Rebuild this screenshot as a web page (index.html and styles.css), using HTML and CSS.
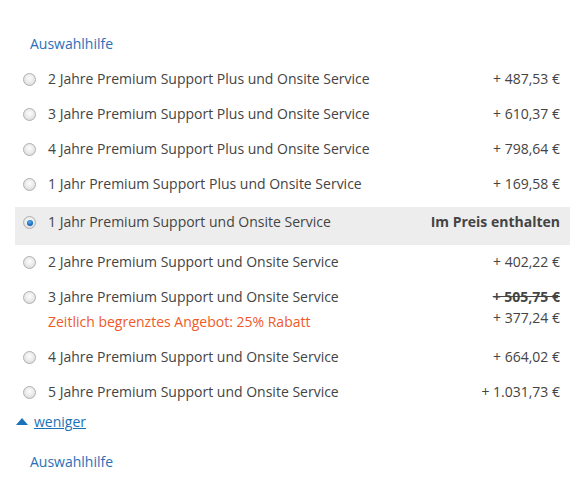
FILE: index.html
```html
<!DOCTYPE html>
<html lang="de">
<head>
<meta charset="utf-8">
<link rel="stylesheet" href="styles.css">
</head>
<body>
<div class="panel">
  <a class="help help-top" href="#">Auswahlhilfe</a>
  <ul class="options">
    <li class="opt"><span class="radio"></span><span class="label">2 Jahre Premium Support Plus und Onsite Service</span><span class="price">+ 487,53 €</span></li>
    <li class="opt"><span class="radio"></span><span class="label">3 Jahre Premium Support Plus und Onsite Service</span><span class="price">+ 610,37 €</span></li>
    <li class="opt"><span class="radio"></span><span class="label">4 Jahre Premium Support Plus und Onsite Service</span><span class="price">+ 798,64 €</span></li>
    <li class="opt"><span class="radio"></span><span class="label">1 Jahr Premium Support Plus und Onsite Service</span><span class="price">+ 169,58 €</span></li>
    <li class="opt selected"><span class="radio checked"></span><span class="label">1 Jahr Premium Support und Onsite Service</span><span class="price incl">Im Preis enthalten</span></li>
    <li class="opt"><span class="radio"></span><span class="label">2 Jahre Premium Support und Onsite Service</span><span class="price">+ 402,22 €</span></li>
    <li class="opt"><span class="radio"></span><span class="label">3 Jahre Premium Support und Onsite Service<span class="promo">Zeitlich begrenztes Angebot: 25% Rabatt</span></span><span class="price"><span class="old">+ 505,75 €</span><span class="new">+ 377,24 €</span></span></li>
    <li class="opt"><span class="radio"></span><span class="label">4 Jahre Premium Support und Onsite Service</span><span class="price">+ 664,02 €</span></li>
    <li class="opt"><span class="radio"></span><span class="label">5 Jahre Premium Support und Onsite Service</span><span class="price">+ 1.031,73 €</span></li>
  </ul>
  <div class="less"><span class="tri"></span><a href="#">weniger</a></div>
  <a class="help help-bottom" href="#">Auswahlhilfe</a>
</div>
</body>
</html>
```
FILE: styles.css
```css
* { box-sizing: border-box; }
html, body { margin: 0; padding: 0; background: #fff; }
body {
  font-family: "Open Sans", "Liberation Sans", sans-serif;
  font-size: 14px;
  line-height: 20px;
  color: #444;
}
.panel {
  width: 578px;
  padding: 34px 8px 0 15px;
  display: flex;
  flex-direction: column;
  align-items: stretch;
}
.help {
  display: block;
  padding-left: 15px;
  color: #2a70b8;
  text-decoration: none;
  align-self: flex-start;
}
.options {
  list-style: none;
  margin: 8px 0 0 0;
  padding: 0;
}
.opt {
  display: flex;
  align-items: flex-start;
  padding: 7px 10px 8px 8px;
}
.opt.selected {
  background: #ededed;
  margin-top: 5px;
  padding-top: 5px;
  padding-bottom: 13px;
}
.radio {
  flex: none;
  width: 13px;
  height: 13px;
  margin-top: 4px;
  margin-right: 12px;
  border-radius: 50%;
  border: 1px solid #b0b0b0;
  background: radial-gradient(circle at 50% 40%, #fdfdfd 0%, #e8e8e8 55%, #d2d2d2 100%);
  position: relative;
}
.radio.checked::after {
  content: "";
  position: absolute;
  left: 2.5px;
  top: 2.5px;
  width: 6px;
  height: 6px;
  border-radius: 50%;
  background: radial-gradient(circle at 45% 35%, #5fb0f0 0%, #1a6fc4 55%, #0b3f7a 100%);
}
.label {
  flex: 1;
  display: flex;
  flex-direction: column;
}
.promo {
  color: #f05a28;
  margin-top: 5px;
}
.price {
  flex: none;
  text-align: right;
  display: flex;
  flex-direction: column;
  align-items: flex-end;
}
.price.incl { font-weight: 700; color: #444; }
.old { font-weight: 700; text-decoration: line-through; line-height: 20px; }
.new { margin-top: 1px; }
.less {
  display: flex;
  align-items: center;
  margin-top: 2px;
  padding-left: 1px;
}
.tri {
  width: 0;
  height: 0;
  border-left: 6px solid transparent;
  border-right: 6px solid transparent;
  border-bottom: 7px solid #1a73b8;
  margin-right: 6px;
  margin-top: -1px;
}
.less a {
  color: #1a73b8;
  text-decoration: underline;
}
.help-bottom { margin-top: 20px; }
```
